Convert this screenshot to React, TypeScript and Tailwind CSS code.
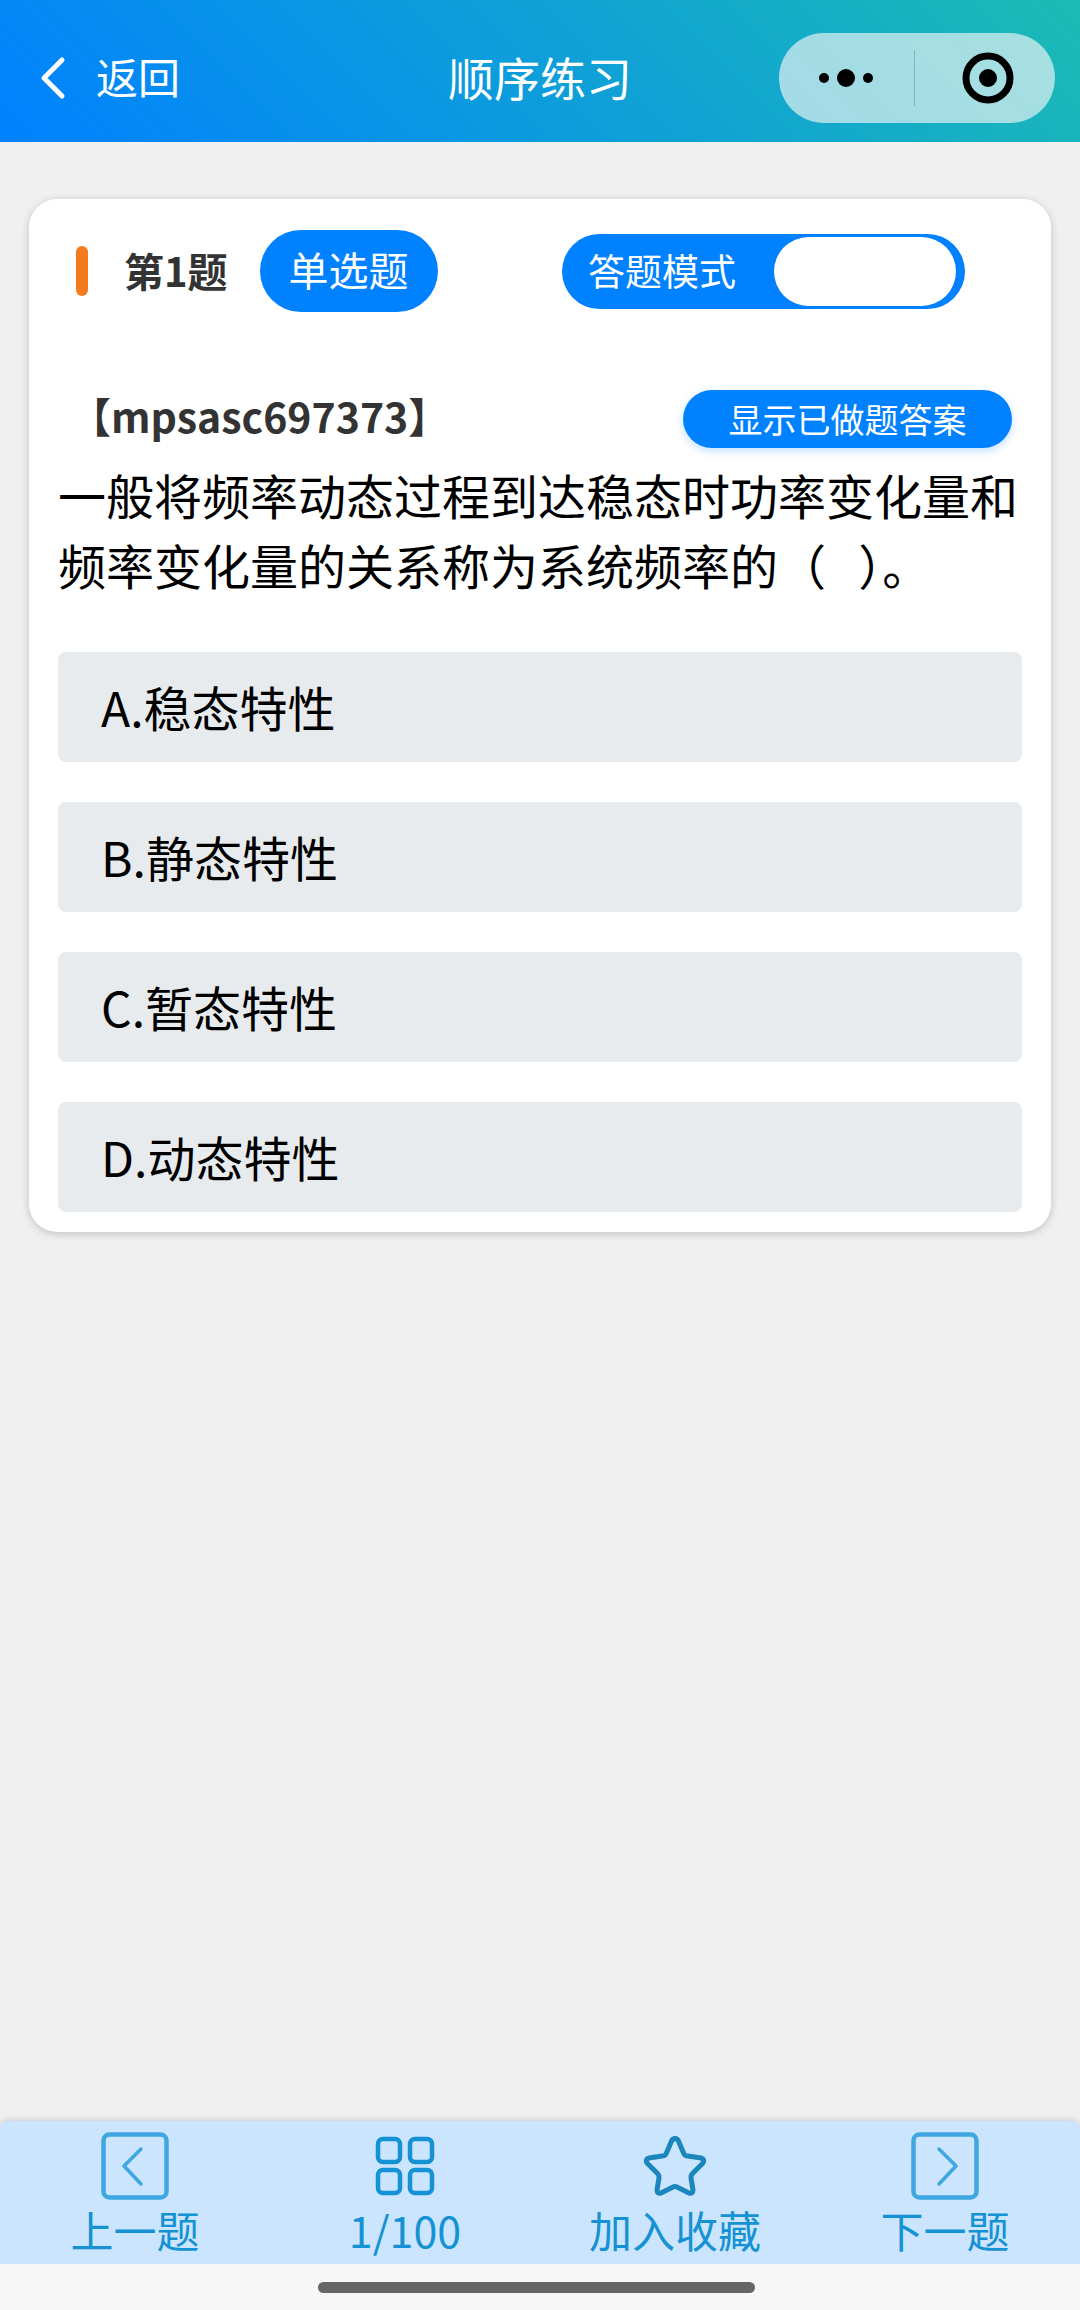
import { useState } from "react";
import type { ReactNode } from "react";

const options = [
  { key: "A", text: "稳态特性" },
  { key: "B", text: "静态特性" },
  { key: "C", text: "暂态特性" },
  { key: "D", text: "动态特性" },
];

function Header() {
  return (
    <header className="flex h-[142px] items-center bg-[linear-gradient(45deg,#0081ff,#1cbbb4)] px-[25px] pt-[14px] text-white">
      <div className="flex flex-1">
        <button type="button" className="flex items-center gap-[28px] pl-[13px] text-[42px] leading-[60px]">
          <svg width="30" height="44" viewBox="0 0 30 44" fill="none" stroke="currentColor" strokeWidth="5" strokeLinecap="round" strokeLinejoin="round" aria-hidden="true">
            <path d="M24 4 6 22l18 18" />
          </svg>
          <span className="pb-[4px]">返回</span>
        </button>
      </div>
      <h1 className="pb-[4px] text-[46px] leading-[60px]">顺序练习</h1>
      <div className="flex flex-1 justify-end">
        <div className="flex h-[90px] w-[276px] items-center rounded-full bg-[#f1f6f6]/65 text-black">
          <button type="button" aria-label="更多" className="flex h-full flex-1 items-center justify-center">
            <svg width="56" height="20" viewBox="0 0 56 20" fill="currentColor" aria-hidden="true">
              <circle cx="6" cy="10" r="5" />
              <circle cx="28" cy="10" r="9" />
              <circle cx="50" cy="10" r="5" />
            </svg>
          </button>
          <span className="h-[56px] w-px bg-[#7fb7bf]" />
          <button type="button" aria-label="关闭" className="flex h-full flex-1 items-center justify-center pl-[6px]">
            <svg width="52" height="52" viewBox="0 0 52 52" aria-hidden="true">
              <circle cx="26" cy="26" r="22" fill="none" stroke="currentColor" strokeWidth="7" />
              <circle cx="26" cy="26" r="9" fill="currentColor" />
            </svg>
          </button>
        </div>
      </div>
    </header>
  );
}

function ModeSwitch() {
  const [on, setOn] = useState(true);
  return (
    <label className="flex h-[75px] w-[403px] cursor-pointer items-center justify-between rounded-full bg-[#0081ff] pr-[9px] pl-[26px] text-[37px] leading-[56px] text-white">
      <input type="checkbox" className="sr-only" checked={on} onChange={() => setOn(!on)} />
      <span className="pb-[3px]">答题模式</span>
      <span className="h-[69px] w-[182px] rounded-full bg-white" />
    </label>
  );
}

function Tab({ label, children }: { label: string; children: ReactNode }) {
  return (
    <button type="button" className="flex flex-1 flex-col items-center text-[43px] leading-[58px] text-[#1592d3]">
      <span className="flex h-[68px] items-center">{children}</span>
      {label}
    </button>
  );
}

function BoxedArrow({ d }: { d: string }) {
  return (
    <svg width="68" height="68" viewBox="0 0 68 68" fill="none" stroke="#3ea6e0" strokeWidth="4.5" strokeLinecap="round" strokeLinejoin="round" aria-hidden="true">
      <rect x="2.5" y="2.5" width="63" height="63" rx="6" />
      <path d={d} strokeWidth="3.5" />
    </svg>
  );
}

function Footer() {
  return (
    <footer>
      <nav className="flex h-[143px] rounded-t-[8px] bg-[#cce5ff] pt-[11px] shadow-[0_-1px_6px_rgba(0,0,0,0.16)]">
        <Tab label="上一题">
          <BoxedArrow d="M40 17 23 34l17 18" />
        </Tab>
        <Tab label="1/100">
          <svg width="60" height="60" viewBox="0 0 60 60" fill="none" stroke="#1592d3" strokeWidth="4.5" aria-hidden="true">
            <rect x="3" y="3" width="22" height="23" rx="5" />
            <rect x="35" y="3" width="22" height="23" rx="5" />
            <rect x="3" y="34" width="22" height="23" rx="5" />
            <rect x="35" y="34" width="22" height="23" rx="5" />
          </svg>
        </Tab>
        <Tab label="加入收藏">
          <svg width="64" height="60" viewBox="0 0 64 60" fill="none" stroke="#1b86bd" strokeWidth="5" strokeLinejoin="round" aria-hidden="true">
            <path d="M29 4 Q32 1 35 4 L41 18 Q42 20 45 20 L58 22 Q62 23 60 27 L49 38 Q48 39 48 42 L50 54 Q50 58 46 57 L34 51 Q32 50 30 51 L18 57 Q14 58 14 54 L16 42 Q16 39 15 38 L4 27 Q2 23 6 22 L19 20 Q22 20 23 18 Z" />
          </svg>
        </Tab>
        <Tab label="下一题">
          <BoxedArrow d="M28 17 45 34 28 52" />
        </Tab>
      </nav>
      <div className="flex h-[46px] justify-center bg-[#f7f7f7] pt-[18px] pr-[8px]">
        <span className="h-[11px] w-[437px] rounded-full bg-[#666666]" />
      </div>
    </footer>
  );
}

export default function App() {
  const [selected, setSelected] = useState<string | null>(null);
  return (
    <div className="flex min-h-screen flex-col bg-[#f0f0f0] font-['Noto_Sans_CJK_SC',sans-serif] text-black">
      <Header />
      <main className="flex-1 px-[29px] pt-[57px]">
        <section className="rounded-[28px] bg-white px-[29px] pb-[20px] shadow-[0_2px_8px_rgba(0,0,0,0.2)]">
          <div className="flex items-center justify-between pt-[31px] pr-[57px] pl-[18px]">
            <div className="flex items-center">
              <span className="h-[50px] w-[12px] rounded-full bg-[#f37b1d]" />
              <h2 className="pr-[32px] pb-[3px] pl-[36px] text-[40px] leading-[60px] font-bold text-[#333333]">第1题</h2>
              <span className="rounded-full bg-[#0081ff] px-[29px] pt-[9px] pb-[13px] text-[40px] leading-[60px] text-white">单选题</span>
            </div>
            <ModeSwitch />
          </div>
          <div className="flex items-center justify-between pt-[78px] pr-[10px] pl-[12px]">
            <p className="pb-[8px] text-[41px] leading-[50px] font-bold text-[#333333]">【mpsasc697373】</p>
            <button type="button" className="h-[58px] w-[329px] rounded-full bg-[#0081ff] text-[34px] leading-[56px] text-white shadow-[0_3px_8px_rgba(0,129,255,0.25)]">
              显示已做题答案
            </button>
          </div>
          <p className="pt-[11px] text-[48px] leading-[70px]">
            一般将频率动态过程到达稳态时功率变化量和频率变化量的关系称为系统频率的（&nbsp;&nbsp;&nbsp;）。
          </p>
          <div className="flex flex-col gap-[40px] pt-[53px]">
            {options.map((o) => (
              <button
                key={o.key}
                type="button"
                aria-pressed={selected === o.key}
                onClick={() => setSelected(o.key)}
                className="h-[110px] rounded-[8px] bg-[#e7ebed] px-[43px] pb-[2px] text-left text-[48px] leading-[70px]"
              >
                {o.key}.{o.text}
              </button>
            ))}
          </div>
        </section>
      </main>
      <Footer />
    </div>
  );
}
